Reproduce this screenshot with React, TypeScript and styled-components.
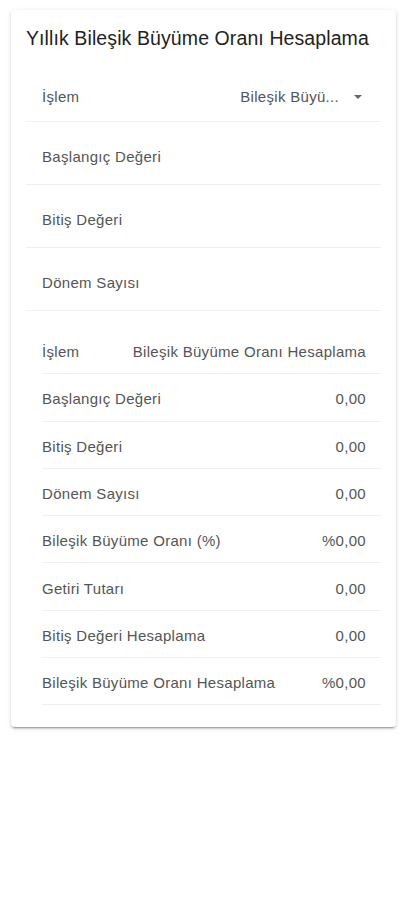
import styled, { createGlobalStyle } from "styled-components";

const GlobalStyle = createGlobalStyle`
  body {
    margin: 0;
    background: #fff;
    font-family: "Liberation Sans", Arial, sans-serif;
  }
`;

const Page = styled.div`
  padding: 10px 10px 10px 11px;
`;

const Card = styled.div`
  background: #fff;
  border-radius: 4px;
  box-shadow: 0 2px 2px rgba(0, 0, 0, 0.14), 0 1px 5px rgba(0, 0, 0, 0.12),
    0 3px 1px -2px rgba(0, 0, 0, 0.2);
  padding: 0 15px 22px 15px;
`;

const Title = styled.div`
  height: 49px;
  display: flex;
  align-items: center;
  padding-top: 7px;
  box-sizing: border-box;
  font-size: 19.5px;
  letter-spacing: 0.1px;
  color: #222;
`;

const FormRow = styled.div<{ $top?: number }>`
  height: 63px;
  box-sizing: border-box;
  padding: ${(p) => p.$top ?? 7}px 19px 0 16px;
  display: flex;
  align-items: center;
  justify-content: space-between;
  border-bottom: 1px solid #efefef;
  font-size: 15px;
  letter-spacing: 0.3px;
  color: #555;
`;

const SelectValue = styled.div`
  display: flex;
  align-items: center;
  gap: 15px;
  color: #555;
`;

const Arrow = styled.span`
  width: 0;
  height: 0;
  border-left: 4px solid transparent;
  border-right: 4px solid transparent;
  border-top: 4px solid #666;
`;

const Results = styled.div`
  margin: 16px 0 0 16px;
`;

const ResultRow = styled.div`
  height: 47.3px;
  box-sizing: border-box;
  padding: 3px 15px 0 0;
  display: flex;
  align-items: center;
  justify-content: space-between;
  border-bottom: 1px solid #efefef;
  font-size: 15px;
  letter-spacing: 0.3px;
  color: #555;
`;

const fields = ["Başlangıç Değeri", "Bitiş Değeri", "Dönem Sayısı"];

const results: [string, string][] = [
  ["İşlem", "Bileşik Büyüme Oranı Hesaplama"],
  ["Başlangıç Değeri", "0,00"],
  ["Bitiş Değeri", "0,00"],
  ["Dönem Sayısı", "0,00"],
  ["Bileşik Büyüme Oranı (%)", "%0,00"],
  ["Getiri Tutarı", "0,00"],
  ["Bitiş Değeri Hesaplama", "0,00"],
  ["Bileşik Büyüme Oranı Hesaplama", "%0,00"],
];

const App = () => {
  return (
    <Page>
      <GlobalStyle />
      <Card>
        <Title>Yıllık Bileşik Büyüme Oranı Hesaplama</Title>
        <FormRow $top={13}>
          <span>İşlem</span>
          <SelectValue>
            <span>Bileşik Büyü...</span>
            <Arrow />
          </SelectValue>
        </FormRow>
        {fields.map((f) => (
          <FormRow key={f}>
            <span>{f}</span>
          </FormRow>
        ))}
        <Results>
          {results.map(([label, value]) => (
            <ResultRow key={label}>
              <span>{label}</span>
              <span>{value}</span>
            </ResultRow>
          ))}
        </Results>
      </Card>
    </Page>
  );
};

export default App;
